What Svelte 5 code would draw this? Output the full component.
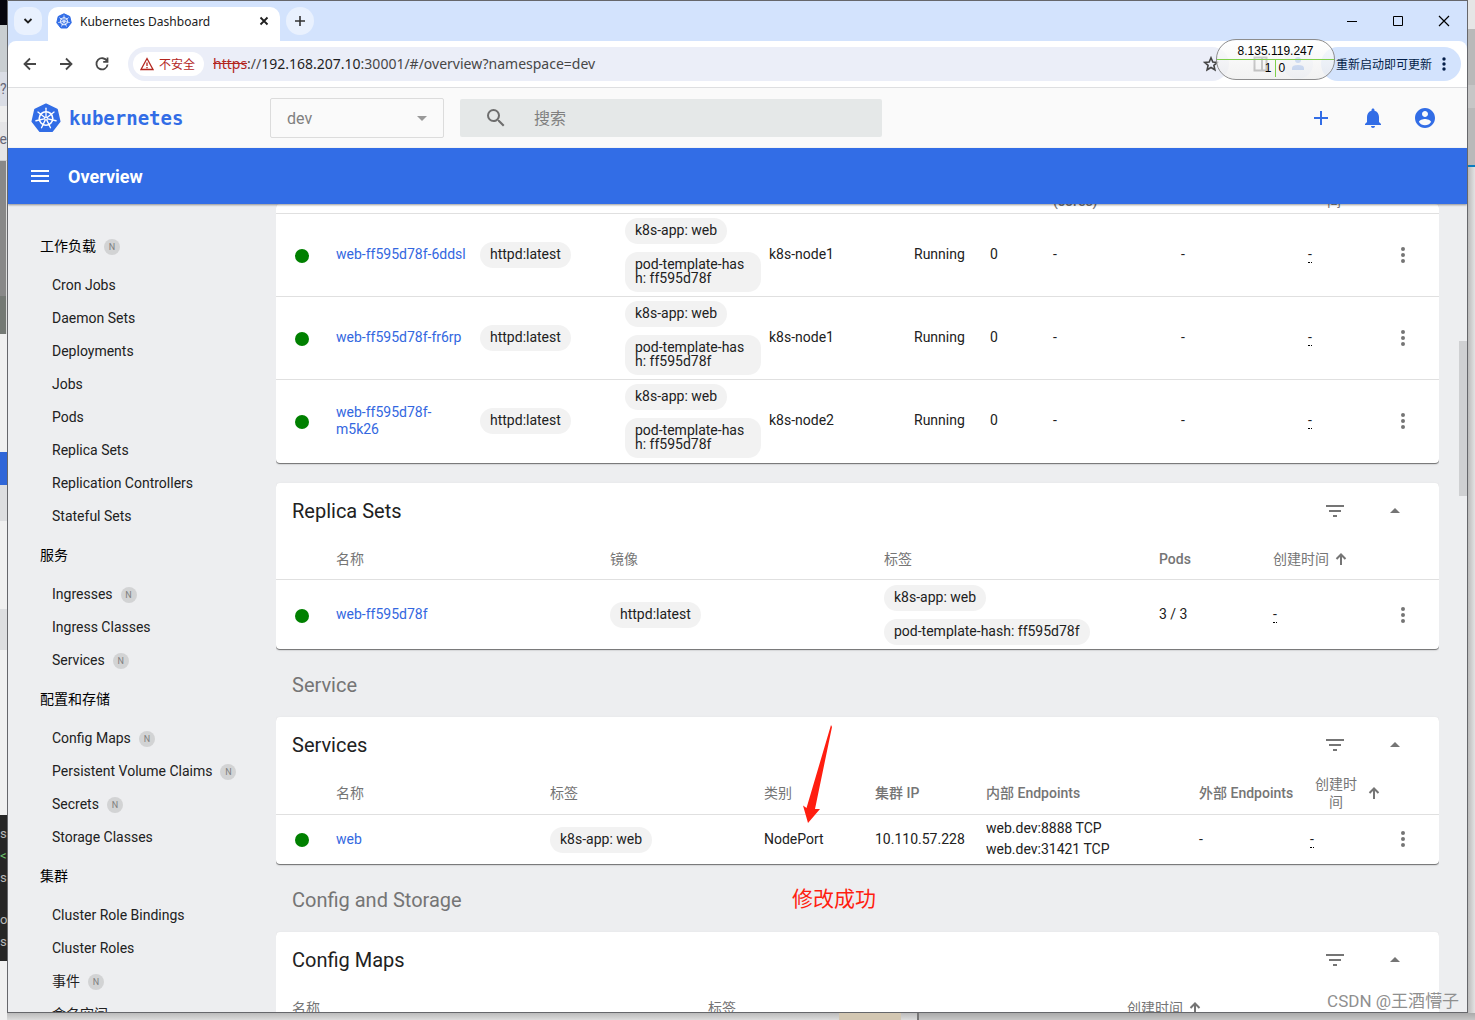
<script lang="ts">
	interface NavItem {
		name: string
		namespaced?: boolean
	}

	interface NavGroup extends NavItem {
		items: NavItem[]
	}

	interface Column {
		kind: string
		label: string
		width: number
	}

	interface Resource {
		title: string
		columns: Column[]
		rows: Record<string, string[]>[]
	}

	const nav: NavGroup[] = [
		{
			name: '工作负载',
			namespaced: true,
			items: [
				{ name: 'Cron Jobs' },
				{ name: 'Daemon Sets' },
				{ name: 'Deployments' },
				{ name: 'Jobs' },
				{ name: 'Pods' },
				{ name: 'Replica Sets' },
				{ name: 'Replication Controllers' },
				{ name: 'Stateful Sets' }
			]
		},
		{
			name: '服务',
			items: [
				{ name: 'Ingresses', namespaced: true },
				{ name: 'Ingress Classes' },
				{ name: 'Services', namespaced: true }
			]
		},
		{
			name: '配置和存储',
			items: [
				{ name: 'Config Maps', namespaced: true },
				{ name: 'Persistent Volume Claims', namespaced: true },
				{ name: 'Secrets', namespaced: true },
				{ name: 'Storage Classes' }
			]
		},
		{
			name: '集群',
			items: [
				{ name: 'Cluster Role Bindings' },
				{ name: 'Cluster Roles' },
				{ name: '事件', namespaced: true },
				{ name: '命名空间' }
			]
		}
	]

	const pods: Resource = {
		title: '',
		columns: [
			{ kind: 'status', label: '', width: 60 },
			{ kind: 'name', label: '', width: 144 },
			{ kind: 'images', label: '', width: 145 },
			{ kind: 'labels', label: '', width: 144 },
			{ kind: 'node', label: '', width: 145 },
			{ kind: 'phase', label: '', width: 76 },
			{ kind: 'restarts', label: '', width: 63 },
			{ kind: 'cpu', label: '(cores)', width: 128 },
			{ kind: 'memory', label: '', width: 127 },
			{ kind: 'created', label: '间', width: 77 },
			{ kind: 'menu', label: '', width: 54 }
		],
		rows: ['6ddsl', 'fr6rp', 'm5k26'].map((id, i) => ({
			name: ['web-ff595d78f-' + id],
			images: ['httpd:latest'],
			labels: ['k8s-app: web', 'pod-template-hash: ff595d78f'],
			node: [i === 2 ? 'k8s-node2' : 'k8s-node1'],
			phase: ['Running'],
			restarts: ['0'],
			cpu: ['-'],
			memory: ['-'],
			created: ['-']
		}))
	}

	const replicaSets: Resource = {
		title: 'Replica Sets',
		columns: [
			{ kind: 'status', label: '', width: 60 },
			{ kind: 'name', label: '名称', width: 274 },
			{ kind: 'images', label: '镜像', width: 274 },
			{ kind: 'labels', label: '标签', width: 275 },
			{ kind: 'pods', label: 'Pods', width: 114 },
			{ kind: 'created', label: '创建时间', width: 112 },
			{ kind: 'menu', label: '', width: 54 }
		],
		rows: [
			{
				name: ['web-ff595d78f'],
				images: ['httpd:latest'],
				labels: ['k8s-app: web', 'pod-template-hash: ff595d78f'],
				pods: ['3 / 3'],
				created: ['-']
			}
		]
	}

	const services: Resource = {
		title: 'Services',
		columns: [
			{ kind: 'status', label: '', width: 60 },
			{ kind: 'name', label: '名称', width: 214 },
			{ kind: 'labels', label: '标签', width: 214 },
			{ kind: 'type', label: '类别', width: 111 },
			{ kind: 'ip', label: '集群 IP', width: 111 },
			{ kind: 'internal', label: '内部 Endpoints', width: 213 },
			{ kind: 'external', label: '外部 Endpoints', width: 111 },
			{ kind: 'created', label: '创建时间', width: 75 },
			{ kind: 'menu', label: '', width: 54 }
		],
		rows: [
			{
				name: ['web'],
				labels: ['k8s-app: web'],
				type: ['NodePort'],
				ip: ['10.110.57.228'],
				internal: ['web.dev:8888 TCP', 'web.dev:31421 TCP'],
				external: ['-'],
				created: ['-']
			}
		]
	}

	const configMaps: Resource = {
		title: 'Config Maps',
		columns: [
			{ kind: 'pad', label: '', width: 16 },
			{ kind: 'name', label: '名称', width: 416 },
			{ kind: 'labels', label: '标签', width: 419 },
			{ kind: 'created', label: '创建时间', width: 258 },
			{ kind: 'menu', label: '', width: 54 }
		],
		rows: []
	}

	const spokes = [0, 1, 2, 3, 4, 5, 6].map(i => (i * 360) / 7)

	let namespace = $state('dev')
	let query = $state('')

	function share(columns: Column[], width: number) {
		const total = columns.reduce((sum, c) => sum + c.width, 0)
		return (width / total) * 100 + '%'
	}
</script>

{#snippet helm(cls: string)}
	<svg class={cls} viewBox="0 0 32 32" aria-hidden="true">
		<path d="M16 1.5 27.6 7 30.5 19.6 22.4 30H9.6L1.5 19.6 4.4 7z" fill="#326de6" stroke="#326de6" stroke-width="2" stroke-linejoin="round" />
		<g stroke="#fff" fill="none">
			<circle cx="16" cy="16.5" r="7.2" stroke-width="1.8" />
			{#each spokes as angle}
				<path d="M16 14.5V5.5" stroke-width="1.4" stroke-linecap="round" transform="rotate({angle} 16 16.5)" />
			{/each}
			<circle cx="16" cy="16.5" r="2" fill="#fff" stroke="none" />
		</g>
		<circle cx="16" cy="16.5" r="0.9" fill="#326de6" />
	</svg>
{/snippet}

{#snippet badge()}
	<span class="ns-badge">N</span>
{/snippet}

{#snippet table(res: Resource)}
	<table>
		<colgroup>
			{#each res.columns as col}
				<col style:width={share(res.columns, col.width)} />
			{/each}
		</colgroup>
		<thead>
			<tr>
				{#each res.columns as col}
					<th>
						{#if col.label}
							<div class="th-inner" class:narrow={col.kind === 'created' && col.width < 80} class:cjk={!/[a-z]/i.test(col.label)}>
								<span>{col.label}</span>
								{#if col.kind === 'created' && res.title}
									<svg class="sort" viewBox="0 0 12 12"><path d="M6 12V2M1.500 6 6 1.500 10.500 6" fill="none" stroke="#757575" stroke-width="2" /></svg>
								{/if}
							</div>
						{/if}
					</th>
				{/each}
			</tr>
		</thead>
		<tbody>
			{#each res.rows as row}
				<tr>
					{#each res.columns as col}
						<td class={col.kind}>
							{#if col.kind === 'status'}
								<span class="dot"></span>
							{:else if col.kind === 'menu'}
								<button class="icon-btn" title="Actions">
									<svg viewBox="0 0 24 24"><path d="M12 8a2 2 0 100-4 2 2 0 000 4zm0 2a2 2 0 100 4 2 2 0 000-4zm0 6a2 2 0 100 4 2 2 0 000-4z" /></svg>
								</button>
							{:else if col.kind === 'name'}
								<a href="#/{row.name[0]}">{row.name[0]}</a>
							{:else if col.kind === 'images' || col.kind === 'labels'}
								<div class="chips">
									{#each row[col.kind] as text}
										<span class="chip">{text}</span>
									{/each}
								</div>
							{:else if col.kind === 'created'}
								<span class="relative-time">-</span>
							{:else}
								{#each row[col.kind] ?? [] as text}
									<div>{text}</div>
								{/each}
							{/if}
						</td>
					{/each}
				</tr>
			{/each}
		</tbody>
	</table>
{/snippet}

{#snippet card(res: Resource)}
	<div class="card-header">
		<h2>{res.title}</h2>
		<button class="icon-btn" title="Filter">
			<svg viewBox="0 0 24 24"><path d="M10 18h4v-2h-4v2zM3 6v2h18V6H3zm3 7h12v-2H6v2z" /></svg>
		</button>
		<button class="icon-btn" title="Collapse">
			<svg viewBox="0 0 24 24"><path d="M7 14l5-5 5 5z" /></svg>
		</button>
	</div>
	{@render table(res)}
{/snippet}

<div class="desktop">
	<div class="behind-left">
		<div class="dark-corner"></div>
		<div class="tabs-behind"></div>
		<div class="line">?</div>
		<div class="line low">oe</div>
		<div class="photo"></div>
		<div class="blank"></div>
		<div class="blue"></div>
		<div class="blank tall"></div>
		<div class="terminal">
			<span>s</span>
			<span class="green">&lt;</span>
			<span>s</span>
			<span></span>
			<span>o</span>
			<span>s</span>
		</div>
	</div>

	<div class="window">
		<div class="tabstrip">
			<button class="tab-search" title="Search tabs">
				<svg viewBox="0 0 12 12"><path d="M2.500 4 6 7.500 9.500 4" fill="none" stroke="#1f1f1f" stroke-width="1.800" /></svg>
			</button>
			<div class="tab">
				{@render helm('favicon')}
				<span class="tab-title">Kubernetes Dashboard</span>
				<button class="tab-close" title="Close tab">
					<svg viewBox="0 0 12 12"><path d="M2.500 2.500l7 7M9.500 2.500l-7 7" fill="none" stroke="#1f1f1f" stroke-width="1.800" /></svg>
				</button>
			</div>
			<button class="tab-new" title="New tab">
				<svg viewBox="0 0 12 12"><path d="M6 1v10M1 6h10" fill="none" stroke="#333" stroke-width="1.600" /></svg>
			</button>
			<div class="window-controls">
				<button title="Minimize"><svg viewBox="0 0 12 12"><path d="M1 6.500h10" stroke="#000" /></svg></button>
				<button title="Maximize"><svg viewBox="0 0 12 12"><path d="M1.500 1.500h9v9h-9z" fill="none" stroke="#000" /></svg></button>
				<button title="Close"><svg viewBox="0 0 12 12"><path d="M1 1l10 10M11 1 1 11" fill="none" stroke="#000" stroke-width="1.200" /></svg></button>
			</div>
		</div>

		<div class="toolbar">
			<button class="nav-btn" title="Back">
				<svg viewBox="0 0 16 16"><path d="M14 8H3M8 2.500 2.500 8 8 13.500" /></svg>
			</button>
			<button class="nav-btn" title="Forward">
				<svg viewBox="0 0 16 16"><path d="M2 8h11M8 2.500 13.500 8 8 13.500" /></svg>
			</button>
			<button class="nav-btn" title="Reload">
				<svg viewBox="0 0 16 16"><path d="M13 5.200A5.600 5.600 0 1 0 13.600 8.500M13.500 1.500v4.300H9.200" /></svg>
			</button>
			<div class="omnibox">
				<span class="insecure">
					<svg viewBox="0 0 14 14"><path d="M7 1.500 13 12.500H1zM7 5.500v3.500M7 10v1.300" fill="none" stroke="#b3261e" stroke-width="1.300" /></svg>
					不安全
				</span>
				<span class="url"><s>https</s>://<b>192.168.207.10</b>:30001/#/overview?namespace=dev</span>
				<svg class="star" viewBox="0 0 16 16"><path d="M8 1.800 9.800 6l4.500.4-3.400 3 1 4.400L8 11.500l-3.900 2.300 1-4.400-3.400-3L6.200 6z" fill="none" stroke="#444" stroke-width="1.600" /></svg>
			</div>
			<svg class="panel-icon" viewBox="0 0 16 16"><path d="M1.500 1.500h12v13h-12zM9 1.500v13h4.500v-13z" fill="none" stroke="#474747" stroke-width="2" /></svg>
			<svg class="avatar" viewBox="0 0 30 30"><circle cx="15" cy="15" r="15" fill="#eef3fc" /><circle cx="15" cy="11" r="3" fill="#5c8fe6" /><path d="M9 21v-2q0-3 6-3t6 3v2z" fill="#5c8fe6" /></svg>
			<button class="update">
				重新启动即可更新
				<svg viewBox="0 0 4 16"><circle cx="2" cy="3" r="1.700" /><circle cx="2" cy="8" r="1.700" /><circle cx="2" cy="13" r="1.700" /></svg>
			</button>
			<div class="net-monitor">
				<div class="net-ip">8.135.119.247</div>
				<div class="net-counts"><span>1</span><span>0</span></div>
			</div>
		</div>

		<header class="topbar">
			<a class="brand" href="#/">
				{@render helm('logo')}
				<span>kubernetes</span>
			</a>
			<div class="namespace">
				<select bind:value={namespace} aria-label="Namespace">
					<option>dev</option>
				</select>
				<svg viewBox="0 0 10 5"><path d="M0 0h10L5 5z" fill="#999" /></svg>
			</div>
			<label class="search">
				<svg viewBox="0 0 24 24"><path d="M15.500 14h-.79l-.28-.27A6.470 6.470 0 0 0 16 9.500 6.500 6.500 0 1 0 9.500 16c1.610 0 3.090-.59 4.230-1.570l.27.28v.79l5 4.990L20.490 19l-4.990-5zm-6 0C7.010 14 5 11.990 5 9.500S7.010 5 9.500 5 14 7.010 14 9.500 11.990 14 9.500 14z" /></svg>
				<input type="text" placeholder="搜索" aria-label="搜索" bind:value={query} />
			</label>
			<div class="top-actions">
				<button title="Create"><svg viewBox="0 0 24 24"><path d="M19 13h-6v6h-2v-6H5v-2h6V5h2v6h6z" /></svg></button>
				<button title="Notifications"><svg viewBox="0 0 24 24"><path d="M12 22c1.100 0 2-.9 2-2h-4c0 1.100.9 2 2 2zm6-6v-5c0-3.070-1.630-5.640-4.500-6.320V4c0-.83-.67-1.500-1.500-1.500s-1.500.67-1.500 1.500v.68C7.640 5.360 6 7.920 6 11v5l-2 2v1h16v-1l-2-2z" /></svg></button>
				<button title="Account"><svg viewBox="0 0 24 24"><path d="M12 2C6.480 2 2 6.480 2 12s4.480 10 10 10 10-4.480 10-10S17.520 2 12 2zm0 3c1.660 0 3 1.340 3 3s-1.340 3-3 3-3-1.340-3-3 1.340-3 3-3zm0 14.200a7.200 7.200 0 0 1-6-3.220c.03-1.990 4-3.080 6-3.080 1.990 0 5.970 1.090 6 3.080a7.200 7.200 0 0 1-6 3.220z" /></svg></button>
			</div>
		</header>

		<div class="titlebar">
			<button title="Toggle menu"><svg viewBox="0 0 24 24"><path d="M3 18h18v-2H3v2zm0-5h18v-2H3v2zm0-7v2h18V6H3z" /></svg></button>
			<h1>Overview</h1>
		</div>

		<div class="body">
			<nav>
				{#each nav as group}
					<a class="nav-group" href="#/{group.name}">{group.name}{#if group.namespaced}{@render badge()}{/if}</a>
					{#each group.items as item}
						<a class="nav-item" href="#/{item.name}">{item.name}{#if item.namespaced}{@render badge()}{/if}</a>
					{/each}
				{/each}
			</nav>

			<main>
				<section class="card scrolled">{@render table(pods)}</section>
				<section class="card">{@render card(replicaSets)}</section>
				<h3>Service</h3>
				<section class="card">
					{@render card(services)}
					<svg class="arrow" viewBox="0 0 30 100"><path d="M28 0 29 2 12 84 17 84 5 98 0 80.500 3.500 83z" fill="#ff1e10" /></svg>
				</section>
				<h3>Config and Storage <span class="note">修改成功</span></h3>
				<section class="card">{@render card(configMaps)}</section>
			</main>

			<div class="scrollbar"><div class="thumb"></div></div>
		</div>
		<div class="watermark">CSDN @王酒懵子</div>
	</div>

	<div class="behind-right">
		<div class="r-light"></div>
		<div class="r-gray"></div>
		<div class="r-mid"></div>
		<div class="r-dark"></div>
	</div>
	<div class="behind-bottom"><div class="beige"></div><div class="edge"></div></div>
</div>

<style>
	:global(body) {
		margin: 0;
	}

	.desktop {
		display: grid;
		grid-template-columns: 7px minmax(0, 1fr) 7px;
		grid-template-rows: minmax(0, 1fr) 7px;
		height: 100vh;
		overflow: hidden;
		background: #e3e3e3;
		font-family: Roboto, "Noto Sans CJK SC", sans-serif;
		font-size: 14px;
		line-height: 17px;
		color: #212121;
	}

	button {
		display: flex;
		align-items: center;
		justify-content: center;
		border: none;
		background: none;
		padding: 0;
		font: inherit;
		color: inherit;
		flex-shrink: 0;
	}

	a {
		color: inherit;
		text-decoration: none;
	}

	svg {
		display: block;
		flex-shrink: 0;
	}

	/* slices of the windows underneath */
	.behind-left {
		grid-row: 1 / 3;
		display: flex;
		flex-direction: column;
		overflow: hidden;
		background: #f0f0f0;
		color: #667;
	}

	.dark-corner {
		height: 25px;
		background: #05050d;
	}

	.tabs-behind {
		height: 47px;
		background: #c9ced1;
	}

	.line {
		height: 50px;
		line-height: 34px;
		background: linear-gradient(#dadde5 34px, #eee 34px);
	}

	.low {
		height: 38px;
		background: #e5e5e7;
		border-bottom: 1px solid #ccc;
		direction: rtl;
	}

	.photo {
		height: 173px;
		background: linear-gradient(#888 135px, #747974 135px);
		border-right: 1px solid #ddd;
	}

	.blank {
		height: 118px;
	}

	.blue {
		height: 33px;
		background: #2f66d8;
	}

	.tall {
		height: 330px;
		background: linear-gradient(#dddee0 36px, #f0f0f0 36px 124px, #dddee0 124px 165px, #f0f0f0 165px);
	}

	.terminal {
		display: flex;
		flex-direction: column;
		padding: 8px 0;
		height: 130px;
		background: #262626;
		color: #b8b8b8;
		font-size: 13px;
	}

	.terminal span {
		height: 22px;
		line-height: 22px;
	}

	.terminal .green {
		color: #6fc76f;
	}

	.behind-right {
		display: flex;
		flex-direction: column;
		background: linear-gradient(90deg, #bbb, #e3e3e3);
	}

	.r-light {
		height: 29px;
		background: #e6e6e6;
	}

	.r-gray {
		height: 56px;
		background: #b9b9b9;
	}

	.r-mid {
		height: 23px;
		background: #c6c6c6;
	}

	.r-dark {
		height: 57px;
		background: #b9b9b9;
		border-bottom: 2px solid #0a7cc0;
	}

	.behind-bottom {
		grid-column: 2 / 4;
		display: flex;
		justify-content: flex-end;
		background: linear-gradient(#bbb, #dcdcdc);
	}

	.beige {
		width: 62px;
		background: #d3c7b2;
	}

	.edge {
		width: 556px;
		margin-left: 16px;
		border-left: 2px solid #777;
		background: linear-gradient(#aaa, #c6c6c6);
	}

	.window {
		display: flex;
		flex-direction: column;
		position: relative;
		overflow: hidden;
		border: 1px solid #66676b;
		background: #d3e3fd;
	}

	.tabstrip {
		display: flex;
		align-items: flex-end;
		height: 40px;
		padding-left: 6px;
		font-family: "Noto Sans", sans-serif;
		flex-shrink: 0;
	}

	.tab-search,
	.tab-new {
		width: 28px;
		height: 28px;
		margin-bottom: 6px;
		border-radius: 10px;
		background: #e9f1fe;
	}

	.tab-new {
		margin-left: 6px;
		border-radius: 50%;
	}

	.tab-search svg,
	.tab-new svg,
	.tab-close svg {
		width: 12px;
		height: 12px;
	}

	.tab {
		display: flex;
		align-items: center;
		gap: 8px;
		width: 232px;
		height: 34px;
		margin-left: 6px;
		padding: 0 8px 6px;
		box-sizing: border-box;
		border-radius: 10px 10px 0 0;
		background: #fff;
	}

	.favicon {
		width: 16px;
		height: 16px;
	}

	.tab-title {
		flex: 1;
		font-size: 12px;
	}

	.tab-close {
		width: 16px;
		height: 16px;
	}

	.window-controls {
		display: flex;
		align-self: stretch;
		align-items: center;
		margin-left: auto;
	}

	.window-controls button {
		width: 46px;
		height: 38px;
	}

	.window-controls svg {
		width: 12px;
		height: 12px;
	}

	.toolbar {
		display: flex;
		align-items: center;
		position: relative;
		height: 46px;
		padding: 0 6px 0 4px;
		border-bottom: 1px solid #dedfe1;
		border-radius: 8px 8px 0 0;
		background: #fff;
		font-family: "Noto Sans", "Noto Sans CJK SC", sans-serif;
		flex-shrink: 0;
	}

	.nav-btn {
		width: 36px;
		height: 36px;
	}

	.nav-btn svg {
		width: 16px;
		height: 16px;
		fill: none;
		stroke: #474747;
		stroke-width: 1.8;
	}

	.omnibox {
		display: flex;
		align-items: center;
		flex: 1;
		height: 34px;
		margin-left: 8px;
		padding: 0 10px 0 5px;
		border-radius: 17px;
		background: #ebeef8;
	}

	.insecure {
		display: flex;
		align-items: center;
		gap: 5px;
		height: 24px;
		padding: 0 9px 0 7px;
		border-radius: 12px;
		background: #fff;
		color: #b3261e;
		font-size: 12px;
	}

	.insecure svg {
		width: 14px;
		height: 14px;
	}

	.url {
		margin-left: 9px;
		padding-bottom: 2px;
		font-size: 14px;
		color: #474747;
	}

	.url s {
		color: #b3261e;
	}

	.url b {
		font-weight: 400;
		color: #1f1f1f;
	}

	.star {
		width: 16px;
		height: 16px;
		margin-left: auto;
	}

	.panel-icon {
		width: 16px;
		height: 16px;
		margin-left: 24px;
	}

	.avatar {
		width: 30px;
		height: 30px;
		margin-left: 14px;
	}

	.update {
		gap: 10px;
		height: 34px;
		margin-left: 8px;
		padding: 0 15px;
		border-radius: 17px;
		background: #d3e3fd;
		color: #041e49;
		font-size: 12px;
	}

	.update svg {
		width: 4px;
		height: 16px;
		fill: #041e49;
	}

	.net-monitor {
		position: absolute;
		right: 132px;
		top: -2px;
		width: 117px;
		height: 39px;
		border: 1px solid #8d8d8d;
		border-radius: 20px;
		background: linear-gradient(rgba(255, 255, 255, 0.8), rgba(236, 236, 236, 0.7));
		font-family: "Liberation Sans", sans-serif;
		font-size: 12px;
		color: #000;
		overflow: hidden;
	}

	.net-ip {
		height: 19px;
		line-height: 22px;
		border-bottom: 1px solid #7fd04a;
		text-align: center;
	}

	.net-counts {
		display: grid;
		grid-template-columns: 1fr 1fr;
	}

	.net-counts span {
		padding: 0 3px;
	}

	.net-counts span:first-child {
		border-right: 1px solid #7fd04a;
		text-align: right;
	}

	.topbar {
		display: flex;
		align-items: center;
		height: 60px;
		padding: 0 24px 0 23px;
		background: #fafafa;
		flex-shrink: 0;
	}

	.brand {
		display: flex;
		align-items: center;
		gap: 8px;
		width: 239px;
		font-family: "DejaVu Sans Mono", monospace;
		font-weight: 700;
		font-size: 19px;
		color: #326de6;
	}

	.logo {
		width: 30px;
		height: 30px;
	}

	.namespace {
		display: flex;
		align-items: center;
		width: 172px;
		height: 38px;
		border: 1px solid #dcdcdc;
		border-radius: 2px;
	}

	.namespace select {
		flex: 1;
		min-width: 0;
		padding: 0 16px;
		border: none;
		background: none;
		appearance: none;
		font: inherit;
		font-size: 16px;
		color: #808080;
	}

	.namespace svg {
		width: 10px;
		height: 5px;
		margin-right: 16px;
	}

	.search {
		display: flex;
		align-items: center;
		gap: 26px;
		width: 422px;
		height: 38px;
		margin-left: 16px;
		padding-left: 24px;
		box-sizing: border-box;
		border-radius: 2px;
		background: #e5e8e8;
	}

	.search svg {
		width: 24px;
		height: 24px;
		fill: #6e6e6e;
	}

	.search input {
		flex: 1;
		min-width: 0;
		padding: 0;
		border: none;
		background: none;
		font: inherit;
		font-size: 16px;
	}

	.search input::placeholder {
		color: #808080;
	}

	.top-actions {
		display: flex;
		gap: 28px;
		margin-left: auto;
		padding-right: 6px;
	}

	.top-actions svg,
	.titlebar svg {
		width: 24px;
		height: 24px;
		fill: #326de6;
	}

	.titlebar {
		display: flex;
		align-items: center;
		gap: 16px;
		height: 56px;
		padding: 0 20px;
		background: #326de6;
		box-shadow: 0 1px 2px rgba(0, 0, 0, 0.4);
		color: #fff;
		z-index: 1;
		flex-shrink: 0;
	}

	.titlebar svg {
		fill: #fff;
	}

	h1 {
		margin: 0;
		font-size: 18px;
		font-weight: 700;
	}

	.body {
		display: flex;
		flex: 1;
		min-height: 0;
		background: #edeef0;
	}

	nav {
		width: 268px;
		padding: 20px 0 0 32px;
		box-sizing: border-box;
		overflow: hidden;
		color: #000;
		flex-shrink: 0;
	}

	nav a {
		display: flex;
		align-items: center;
		gap: 8px;
		height: 33px;
		white-space: nowrap;
	}

	nav .nav-group {
		height: 45px;
	}

	nav .nav-item {
		padding-left: 12px;
		color: #212121;
	}

	.ns-badge {
		width: 16px;
		height: 16px;
		border-radius: 50%;
		background: #d2d3d4;
		color: #808080;
		font-size: 9px;
		line-height: 16px;
		text-align: center;
	}

	main {
		flex: 1;
		min-width: 0;
		overflow: hidden;
	}

	.card {
		position: relative;
		margin-bottom: 20px;
		border-radius: 4px;
		background: #fff;
		box-shadow: 0 1px 1px rgba(0, 0, 0, 0.5), 0 1px 3px rgba(0, 0, 0, 0.1);
	}

	.card-header {
		display: flex;
		align-items: center;
		height: 56px;
		padding: 0 32px 0 16px;
	}

	.card-header .icon-btn + .icon-btn {
		margin-left: 36px;
	}

	h2 {
		flex: 1;
		margin: 0;
		font-size: 20px;
		font-weight: 400;
		line-height: 24px;
	}

	h3 {
		position: relative;
		margin: -20px 0 0;
		padding-left: 16px;
		font-size: 20px;
		font-weight: 400;
		line-height: 68px;
		height: 68px;
		color: #757575;
		padding-top: 2px;
		box-sizing: border-box;
	}

	.icon-btn svg {
		width: 24px;
		height: 24px;
		fill: #757575;
	}

	table {
		width: 100%;
		table-layout: fixed;
		border-collapse: collapse;
	}

	th,
	td {
		padding: 0;
		text-align: left;
		vertical-align: middle;
	}

	thead tr {
		height: 41px;
	}

	th {
		font-weight: 500;
		color: #757575;
		border-bottom: 1px solid #e0e0e0;
	}

	.th-inner {
		display: flex;
		align-items: center;
		gap: 6px;
		line-height: 18px;
	}

	.th-inner span {
		text-align: center;
	}

	.narrow span {
		width: 52px;
	}

	.cjk {
		font-weight: 400;
	}

	.sort {
		width: 12px;
		height: 12px;
	}

	tbody tr {
		height: 50px;
	}

	tbody tr + tr td {
		border-top: 1px solid #e0e0e0;
	}

	.dot {
		display: block;
		width: 14px;
		height: 14px;
		margin: 2px 0 0 19px;
		border-radius: 50%;
		background: #008000;
	}

	td.name {
		padding-right: 8px;
	}

	td a {
		color: #3367e0;
	}

	td.internal {
		line-height: 21px;
	}

	.chips {
		display: flex;
		flex-direction: column;
		align-items: flex-start;
		gap: 8px;
		padding: 5px 8px 4px 0;
	}

	.chip {
		padding: 5px 10px 7px;
		border-radius: 13px;
		background: #f2f2f2;
		line-height: 14px;
		word-break: break-all;
	}

	.relative-time {
		border-bottom: 1px dotted #000;
		line-height: 14px;
	}

	td.menu .icon-btn {
		margin-left: 6px;
	}

	/* the pods header has scrolled under the title bar */
	.scrolled {
		padding-bottom: 1px;
	}

	.scrolled thead tr {
		height: 9px;
	}

	.scrolled .th-inner {
		align-items: flex-end;
		height: 8px;
		padding-bottom: 2px;
		box-sizing: border-box;
	}

	.scrolled td {
		height: 82px;
	}

	.scrolled .chips {
		padding-top: 4px;
	}

	.arrow {
		position: absolute;
		left: 527px;
		top: 8px;
		width: 30px;
		height: 100px;
	}

	.note {
		position: absolute;
		left: 516px;
		top: 1px;
		font-size: 21px;
		color: #ff1e10;
	}

	.scrollbar {
		width: 28px;
		display: flex;
		justify-content: flex-end;
		flex-shrink: 0;
	}

	.thumb {
		width: 8px;
		height: 155px;
		margin-top: 137px;
		background: #cfd0d2;
	}

	.watermark {
		position: absolute;
		right: 8px;
		bottom: 2px;
		font-size: 17px;
		color: #8f8f8f;
	}
</style>
